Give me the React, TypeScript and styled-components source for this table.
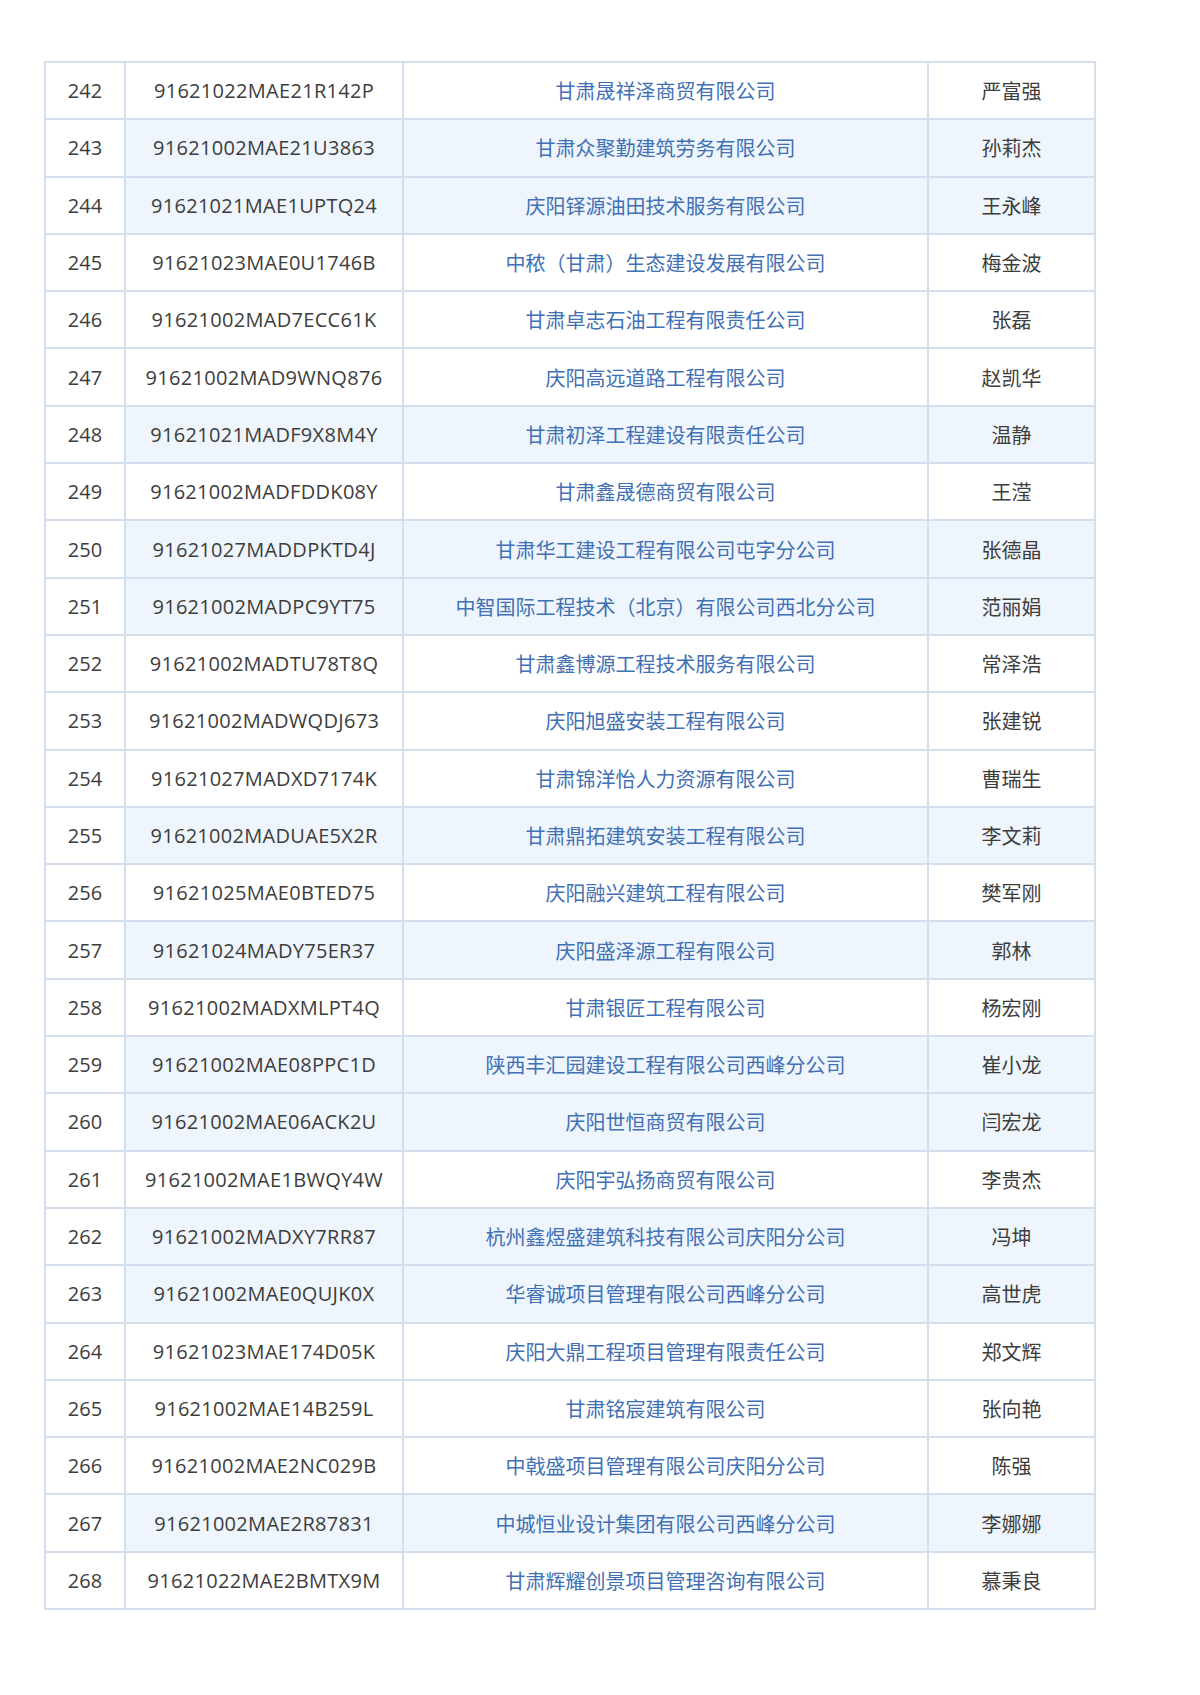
import styled, { createGlobalStyle } from 'styled-components';

const GlobalStyle = createGlobalStyle`
  html, body {
    margin: 0;
    padding: 0;
    background: #ffffff;
  }
  body {
    font-family: "Open Sans", "Noto Sans CJK SC", sans-serif;
  }
`;

type Row = [number, string, string, string];

const ROWS: Row[] = [
  [242, '91621022MAE21R142P', '甘肃晟祥泽商贸有限公司', '严富强'],
  [243, '91621002MAE21U3863', '甘肃众聚勤建筑劳务有限公司', '孙莉杰'],
  [244, '91621021MAE1UPTQ24', '庆阳铎源油田技术服务有限公司', '王永峰'],
  [245, '91621023MAE0U1746B', '中秾（甘肃）生态建设发展有限公司', '梅金波'],
  [246, '91621002MAD7ECC61K', '甘肃卓志石油工程有限责任公司', '张磊'],
  [247, '91621002MAD9WNQ876', '庆阳高远道路工程有限公司', '赵凯华'],
  [248, '91621021MADF9X8M4Y', '甘肃初泽工程建设有限责任公司', '温静'],
  [249, '91621002MADFDDK08Y', '甘肃鑫晟德商贸有限公司', '王滢'],
  [250, '91621027MADDPKTD4J', '甘肃华工建设工程有限公司屯字分公司', '张德晶'],
  [251, '91621002MADPC9YT75', '中智国际工程技术（北京）有限公司西北分公司', '范丽娟'],
  [252, '91621002MADTU78T8Q', '甘肃鑫博源工程技术服务有限公司', '常泽浩'],
  [253, '91621002MADWQDJ673', '庆阳旭盛安装工程有限公司', '张建锐'],
  [254, '91621027MADXD7174K', '甘肃锦洋怡人力资源有限公司', '曹瑞生'],
  [255, '91621002MADUAE5X2R', '甘肃鼎拓建筑安装工程有限公司', '李文莉'],
  [256, '91621025MAE0BTED75', '庆阳融兴建筑工程有限公司', '樊军刚'],
  [257, '91621024MADY75ER37', '庆阳盛泽源工程有限公司', '郭林'],
  [258, '91621002MADXMLPT4Q', '甘肃银匠工程有限公司', '杨宏刚'],
  [259, '91621002MAE08PPC1D', '陕西丰汇园建设工程有限公司西峰分公司', '崔小龙'],
  [260, '91621002MAE06ACK2U', '庆阳世恒商贸有限公司', '闫宏龙'],
  [261, '91621002MAE1BWQY4W', '庆阳宇弘扬商贸有限公司', '李贵杰'],
  [262, '91621002MADXY7RR87', '杭州鑫煜盛建筑科技有限公司庆阳分公司', '冯坤'],
  [263, '91621002MAE0QUJK0X', '华睿诚项目管理有限公司西峰分公司', '高世虎'],
  [264, '91621023MAE174D05K', '庆阳大鼎工程项目管理有限责任公司', '郑文辉'],
  [265, '91621002MAE14B259L', '甘肃铭宸建筑有限公司', '张向艳'],
  [266, '91621002MAE2NC029B', '中戟盛项目管理有限公司庆阳分公司', '陈强'],
  [267, '91621002MAE2R87831', '中城恒业设计集团有限公司西峰分公司', '李娜娜'],
  [268, '91621022MAE2BMTX9M', '甘肃辉耀创景项目管理咨询有限公司', '慕秉良'],
];

// rows with the light blue fill (the index column stays white)
const SHADED = new Set([243, 244, 248, 250, 251, 255, 257, 259, 260, 262, 263, 267]);

const Page = styled.div`
  min-height: 1695px;
  padding: 61px 0 0 44px;
  box-sizing: border-box;
`;

const Table = styled.table`
  width: 1050px;
  table-layout: fixed;
  border-collapse: collapse;
  border: 2px solid #d3dfec;
`;

const Tr = styled.tr`
  height: 55.3px;
`;

const Cell = styled.td<{ $shaded?: boolean; $tone?: 'plain' | 'link' }>`
  border: 2px solid #d3dfec;
  padding: 0;
  text-align: center;
  vertical-align: middle;
  height: 55.3px;
  background: ${(p) => (p.$shaded ? '#eef5fc' : '#ffffff')};
  color: ${(p) => (p.$tone === 'link' ? '#4170b5' : '#3d3d3d')};
  font-size: 20px;
  font-family: ${(p) =>
    p.$tone === 'link'
      ? '"Noto Sans CJK SC", sans-serif'
      : '"Open Sans", "Noto Sans CJK SC", sans-serif'};
  white-space: nowrap;
`;

const IdText = styled.span`
  letter-spacing: 0.3px;
`;

export default function App() {
  return (
    <>
      <GlobalStyle />
      <Page>
        <Table>
          <colgroup>
            <col style={{ width: 80 }} />
            <col style={{ width: 278 }} />
            <col style={{ width: 525 }} />
            <col style={{ width: 167 }} />
          </colgroup>
          <tbody>
            {ROWS.map(([no, code, company, person]) => {
              const shaded = SHADED.has(no);
              return (
                <Tr key={no}>
                  <Cell>{no}</Cell>
                  <Cell $shaded={shaded}>
                    <IdText>{code}</IdText>
                  </Cell>
                  <Cell $shaded={shaded} $tone="link">
                    {company}
                  </Cell>
                  <Cell $shaded={shaded}>{person}</Cell>
                </Tr>
              );
            })}
          </tbody>
        </Table>
      </Page>
    </>
  );
}
